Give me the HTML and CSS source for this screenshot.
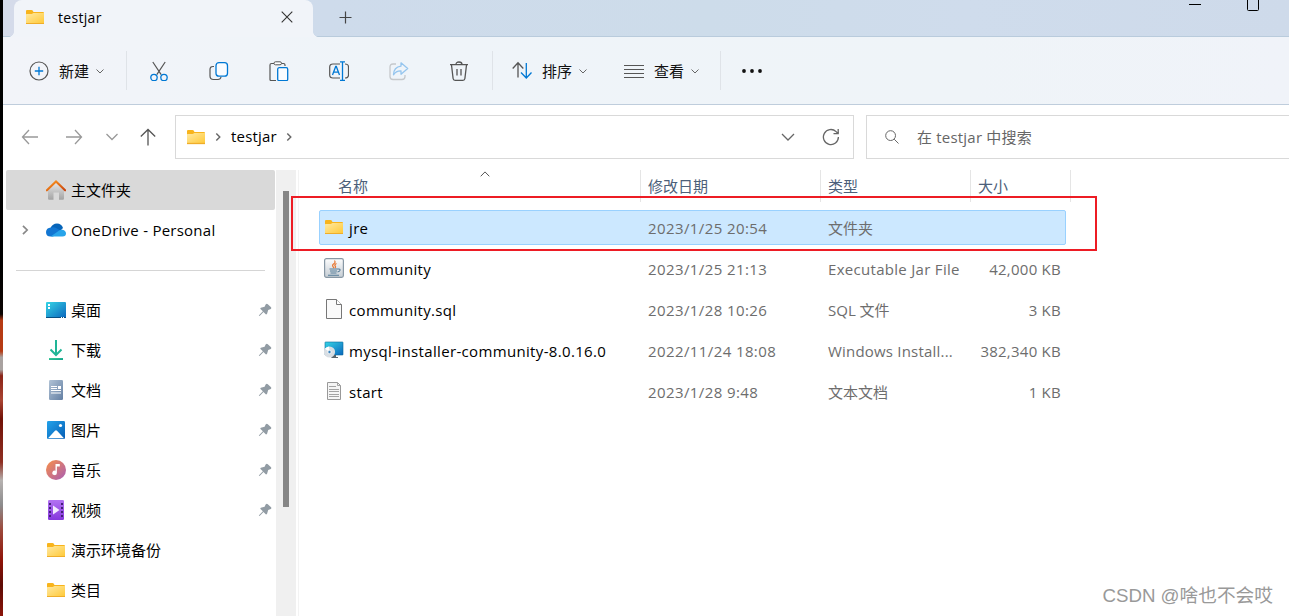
FILE: index.html
```
<!DOCTYPE html>
<html lang="zh-CN">
<head>
    <meta charset="UTF-8">
    <meta name="viewport" content="width=device-width, initial-scale=1.0">
    <title>testjar</title>
    <link rel="stylesheet" href="styles.css">
</head>
<body>
    <!-- Shared icons -->
    <svg class="defs" width="0" height="0">
        <defs>
            <linearGradient id="gFolder" x1="0" y1="0" x2="1" y2="1"><stop offset="0" stop-color="#ffe9a2"/><stop offset="1" stop-color="#ffc937"/></linearGradient>
            <linearGradient id="gRoof" x1="0" y1="0" x2="1" y2="1"><stop offset="0" stop-color="#ff9a1f"/><stop offset="1" stop-color="#c8420c"/></linearGradient>
            <linearGradient id="gHouse" x1="0" y1="0" x2="0" y2="1"><stop offset="0" stop-color="#e9e9e9"/><stop offset="1" stop-color="#a3a3a3"/></linearGradient>
            <linearGradient id="gDesk" x1="0" y1="0" x2="1" y2="1"><stop offset="0" stop-color="#35d5e6"/><stop offset="1" stop-color="#0b66bd"/></linearGradient>
            <linearGradient id="gDown" x1="0" y1="0" x2="1" y2="1"><stop offset="0" stop-color="#3bcf97"/><stop offset="1" stop-color="#0f9d8c"/></linearGradient>
            <linearGradient id="gDoc" x1="0" y1="0" x2="1" y2="1"><stop offset="0" stop-color="#b1c3d6"/><stop offset="1" stop-color="#637fa3"/></linearGradient>
            <linearGradient id="gPic" x1="0" y1="0" x2="1" y2="1"><stop offset="0" stop-color="#22a2ea"/><stop offset="1" stop-color="#075eb5"/></linearGradient>
            <linearGradient id="gMusic" x1="0" y1="0" x2="1" y2="1"><stop offset="0.1" stop-color="#f18b52"/><stop offset="1" stop-color="#a85cb5"/></linearGradient>
            <linearGradient id="gVideo" x1="0" y1="0" x2="0" y2="1"><stop offset="0" stop-color="#b273f2"/><stop offset="1" stop-color="#8638dd"/></linearGradient>
            <linearGradient id="gJar" x1="0" y1="0" x2="0" y2="1"><stop offset="0" stop-color="#fdfdfd"/><stop offset="1" stop-color="#c5cdd4"/></linearGradient>
        </defs>
        <symbol id="folder" viewBox="0 0 20 20">
            <path d="M1 4q0-1 1-1h4.500q.7 0 1.200.5L8.500 5H18q1 0 1 1v10H1z" fill="#f8b41c"/>
            <path d="M1 7.500q0-.5.5-.5h5.200L8.500 6H19v10.500H1z" fill="url(#gFolder)"/>
            <path d="M1 16.500h18" stroke="#efad2a"/>
        </symbol>
        <symbol id="down" viewBox="0 0 10 10">
            <path d="M1.500 3.500L5 7l3.500-3.500" fill="none" stroke="currentColor"/>
        </symbol>
        <symbol id="right" viewBox="0 0 10 10">
            <path d="M3.300 1.500L6.800 5 3.300 8.500" fill="none" stroke="currentColor" stroke-width="1.400"/>
        </symbol>
        <symbol id="pin" viewBox="0 0 14 14">
            <path d="M7.800 1.200q1-1 2 0l3 2.800q1.200 1 0 1.900L10.200 7l-1.200 4-1 .5-2.500-2.600L1.600 13l-.8-.6L4.900 8.200 2.200 5.800l.6-1.100 3.800-.9z" fill="#929ca4"/>
        </symbol>
    </svg>

    <div class="desktop"></div>

    <div class="window">
        <div class="titlebar">
            <div class="tab">
                <svg class="icon"><use href="#folder"/></svg>
                <span class="tab-title">testjar</span>
                <svg class="tab-close" viewBox="0 0 12 12"><path d="M.7.7l10.600 10.600M11.300.7L.7 11.300" stroke="#333" stroke-width="1.100"/></svg>
            </div>
            <svg class="tab-new" viewBox="0 0 13 13"><path d="M6.500.5v12M.5 6.500h12" stroke="#444" stroke-width="1.200"/></svg>
            <div class="controls">
                <svg width="12" height="12"><path d="M0 4.500h12" stroke="#000"/></svg>
                <svg width="12" height="12"><rect x=".5" y="-2" width="11" height="12.500" rx="1" fill="none" stroke="#000"/></svg>
            </div>
        </div>

        <div class="toolbar">
            <button class="tool new">
                <svg class="icon" viewBox="0 0 20 20"><circle cx="10" cy="10" r="9" fill="none" stroke="#555" stroke-width="1.200"/><path d="M10 5.800v8.400M5.800 10h8.400" stroke="#0078d4" stroke-width="1.300"/></svg>
                <span>新建</span>
                <svg class="chev"><use href="#down"/></svg>
            </button>
            <div class="divider"></div>
            <div class="actions">
                <svg class="icon" viewBox="0 0 20 20"><path d="M3.800 1l8.400 12.600M16.200 1L7.800 13.600" stroke="#555" stroke-width="1.200"/><g fill="none" stroke="#0078d4" stroke-width="1.300"><circle cx="5" cy="16.500" r="3.200"/><circle cx="15" cy="16.500" r="3.200"/></g></svg>
                <svg class="icon" viewBox="0 0 20 20"><path d="M5 5.500H4Q1 5.500 1 8.500v6.500q0 3.500 3.500 3.500H9q2.500 0 3-2.500" fill="none" stroke="#555" stroke-width="1.200"/><rect x="7" y="1.700" width="11.500" height="13.500" rx="3" fill="#fafcff" stroke="#0078d4" stroke-width="1.300"/></svg>
                <svg class="icon" viewBox="0 0 20 20"><path d="M5 2.500H2.500Q1 2.500 1 4v14.500q0 1 1 1h5M12 2.500h2.500Q16 2.500 16 4v1" fill="none" stroke="#555" stroke-width="1.200"/><rect x="5" y=".8" width="7.500" height="3" rx="1.500" fill="#fff" stroke="#555"/><rect x="8.700" y="6.700" width="10" height="13" rx="1.500" fill="#fafcff" stroke="#0078d4" stroke-width="1.300"/></svg>
                <svg class="icon" viewBox="0 0 20 20"><path d="M11 3H4Q.7 3 .7 6v8q0 3 3.300 3h7M16 3q3.500 0 3.500 3v8q0 3-3.500 3" fill="none" stroke="#555" stroke-width="1.200"/><path d="M3.500 14l3.200-8.500h.6l3.200 8.500M4.700 11.200h4.700M13.500 1v18.500M11 .8h5M11 19.500h5" fill="none" stroke="#0078d4" stroke-width="1.300"/></svg>
                <svg class="icon" viewBox="0 0 20 20"><path d="M7 3H4Q1 3 1 6v9.500q0 3 3 3h9q3 0 3-3V14" fill="none" stroke="#c5c8cb" stroke-width="1.300"/><path d="M12 1.800l6.700 5.700-6.700 5.700v-3.400q-5-.2-7.500 4 .2-7.800 7.500-8.700z" fill="none" stroke="#95c5ee" stroke-width="1.300" stroke-linejoin="round"/></svg>
                <svg class="icon" viewBox="0 0 20 20"><g fill="none" stroke="#555" stroke-width="1.300"><path d="M1 3.700h18M2.500 4l1.600 13.500q.2 1.800 2 1.800h7.800q1.800 0 2-1.800L17.500 4M7 3.500Q7 1 10 1t3 2.500M8 8v6.500M12 8v6.500"/></g></svg>
            </div>
            <div class="divider"></div>
            <button class="tool sort">
                <svg class="icon" viewBox="0 0 20 20"><g fill="none" stroke-width="1.300"><path d="M.7 7.500L6 1.700l5.300 5.800M6 2v14.500" stroke="#555"/><path d="M9 11.500l5.300 5.500 5.200-5.500M14.300 2v14.500" stroke="#0078d4"/></g></svg>
                <span>排序</span>
                <svg class="chev"><use href="#down"/></svg>
            </button>
            <button class="tool view">
                <svg class="icon" viewBox="0 0 20 20"><path d="M0 4.500h20M0 8.500h20M0 12.500h20M0 16.500h20" stroke="#555" stroke-width="1.100"/></svg>
                <span>查看</span>
                <svg class="chev"><use href="#down"/></svg>
            </button>
            <div class="divider"></div>
            <svg class="more" viewBox="0 0 20 4"><circle cx="2" cy="2" r="1.900"/><circle cx="10" cy="2" r="1.900"/><circle cx="18" cy="2" r="1.900"/></svg>
        </div>

        <div class="navbar">
            <div class="arrows">
                <svg viewBox="0 0 18 16"><path d="M8 1L1.500 8 8 15M1.500 8H17"/></svg>
                <svg viewBox="0 0 18 16"><path d="M10 1l6.500 7L10 15M16.500 8H1"/></svg>
                <svg viewBox="0 0 18 16"><path d="M3.500 5L9 10.500 14.500 5"/></svg>
                <svg class="up" viewBox="0 0 18 16"><path d="M1.800 7.500L9 .5l7.200 7M9 .8V16.500"/></svg>
            </div>
            <div class="address">
                <svg class="icon"><use href="#folder"/></svg>
                <svg class="chev"><use href="#right"/></svg>
                <span>testjar</span>
                <svg class="chev"><use href="#right"/></svg>
                <svg class="history" viewBox="0 0 14 14"><path d="M1 4l6 6 6-6"/></svg>
                <svg class="refresh" viewBox="0 0 18 18"><path d="M16.400 9a7.500 7.500 0 1 1-2.300-5.400L16 5.500M16.200 1v4.700h-4.700"/></svg>
            </div>
            <div class="search">
                <svg viewBox="0 0 14 14"><circle cx="5.600" cy="5.600" r="4.900"/><path d="M9.200 9.200l4.300 4.300"/></svg>
                <span>在 testjar 中搜索</span>
            </div>
        </div>

        <div class="main">
            <div class="sidebar">
                <div class="side-item active">
                    <svg class="icon" viewBox="0 0 20 20"><path d="M2 9.500L10 2l8 7.500v9q0 1.200-1.200 1.200H13V12.500H7.500v7.200H3.200Q2 19.700 2 18.500z" fill="url(#gHouse)"/><path d="M.9 10.300L10 1.500l9.100 8.800" fill="none" stroke="url(#gRoof)" stroke-width="2.100" stroke-linecap="round"/></svg>
                    <span>主文件夹</span>
                </div>
                <div class="side-item drive">
                    <svg class="expand"><use href="#right"/></svg>
                    <svg class="icon" viewBox="0 0 20 20"><path d="M4.500 8Q6.500 3.500 11 3.500q4.500 0 6 4.500L12 13 3 11z" fill="#0664b9"/><path d="M5 7.500q3-1 6 1l5 3-9 5H4.500Q0 16.500 0 12q.2-4.200 5-4.500z" fill="#1276d2"/><path d="M5 16.300l7.500-5.300q2-1.800 4-1.200 3.500 1 3.500 3.700 0 3-3.500 3H6.500q-1 0-1.500-.2z" fill="#28a4ea"/></svg>
                    <span>OneDrive - Personal</span>
                </div>
                <div class="side-line"></div>
                <div class="side-item">
                    <svg class="icon" viewBox="0 0 20 20"><rect y="2" width="20" height="16" rx="1" fill="url(#gDesk)"/><path d="M0 17h20v.5q0 .5-.5.5H.5Q0 18 0 17.500z" fill="#074f83"/><path d="M2 4h2v2H2zM2 7h2v2H2zM15 17h1v1h-1zM17 17h1v1h-1z" fill="#fff"/></svg>
                    <span>桌面</span>
                    <svg class="pin"><use href="#pin"/></svg>
                </div>
                <div class="side-item">
                    <svg class="icon" viewBox="0 0 20 20"><path d="M10 0v15M4.500 9.500L10 15l5.500-5.500" fill="none" stroke="#20b596" stroke-width="2"/><path d="M3 18h14v2H3z" fill="url(#gDown)"/></svg>
                    <span>下载</span>
                    <svg class="pin"><use href="#pin"/></svg>
                </div>
                <div class="side-item">
                    <svg class="icon" viewBox="0 0 20 20"><rect x="3" width="14" height="20" rx="1.200" fill="url(#gDoc)"/><path d="M5 6h6v1H5zM5 8h6v1H5zM12 6h3v3h-3zM5 10h10v1H5zM5 12.500h10v1H5z" fill="#fff"/></svg>
                    <span>文档</span>
                    <svg class="pin"><use href="#pin"/></svg>
                </div>
                <div class="side-item">
                    <svg class="icon" viewBox="0 0 20 20"><rect x="1" y="1" width="18" height="18" rx="1.200" fill="url(#gPic)"/><path d="M2 18.300l7-7.500q1-1 2 0l7 7.500z" fill="#fff"/><circle cx="14.500" cy="5.500" r="1.600" fill="#fff"/></svg>
                    <span>图片</span>
                    <svg class="pin"><use href="#pin"/></svg>
                </div>
                <div class="side-item">
                    <svg class="icon" viewBox="0 0 20 20"><circle cx="10" cy="10" r="10" fill="url(#gMusic)"/><path d="M9.500 4h4.300v2.600h-2.900v6.100a2.300 2.300 0 1 1-1.400-2z" fill="#fff"/></svg>
                    <span>音乐</span>
                    <svg class="pin"><use href="#pin"/></svg>
                </div>
                <div class="side-item">
                    <svg class="icon" viewBox="0 0 20 20"><rect x="2" width="16" height="20" rx="1.200" fill="url(#gVideo)"/><path d="M4 3v16M16 3v16" stroke="#442078" stroke-width="2" stroke-dasharray="2 2"/><path d="M7 5.500l6.500 4.500L7 14.500z" fill="#f3eaff"/></svg>
                    <span>视频</span>
                    <svg class="pin"><use href="#pin"/></svg>
                </div>
                <div class="side-item">
                    <svg class="icon"><use href="#folder"/></svg>
                    <span>演示环境备份</span>
                </div>
                <div class="side-item">
                    <svg class="icon"><use href="#folder"/></svg>
                    <span>类目</span>
                </div>
            </div>
            <div class="scrollbar"><div class="thumb"></div></div>

            <div class="files">
                <div class="file-head">
                    <div class="col name">名称<svg class="asc" viewBox="0 0 10 6"><path d="M.7 5.300L5 .9l4.300 4.400" fill="none" stroke="#555"/></svg></div>
                    <div class="col">修改日期</div>
                    <div class="col">类型</div>
                    <div class="col">大小</div>
                </div>
                <div class="row selected">
                    <div class="name"><svg class="icon"><use href="#folder"/></svg><span>jre</span></div>
                    <div class="date">2023/1/25 20:54</div>
                    <div>文件夹</div>
                    <div class="size"></div>
                </div>
                <div class="row">
                    <div class="name">
                        <svg class="icon" viewBox="0 0 20 20"><rect x=".6" y=".6" width="18.800" height="18.800" rx="1.800" fill="url(#gJar)" stroke="#8898a5" stroke-width="1.200"/><path d="M10.500 2.500q1.500 2-1 3.500-2 1.500.5 4M12.500 5.500q-2.500 1.300-1.300 2.500.9 1-.2 2" fill="none" stroke="#e8732c" stroke-width="1.200"/><path d="M5.500 11h8.500M6 13h7M6.500 15h6M4 17.300h11M14 11q2.500-.3 2 1.400-.5 1.300-2.500 1.600" fill="none" stroke="#547c98" stroke-width="1.100"/></svg>
                        <span>community</span>
                    </div>
                    <div class="date">2023/1/25 21:13</div>
                    <div class="latin">Executable Jar File</div>
                    <div class="size">42,000 KB</div>
                </div>
                <div class="row">
                    <div class="name">
                        <svg class="icon" viewBox="0 0 20 20"><path d="M2.500.5h10l5 5v14h-15z" fill="#fafafa" stroke="#777"/><path d="M12.500.5v5h5" fill="#fff" stroke="#777"/></svg>
                        <span>community.sql</span>
                    </div>
                    <div class="date">2023/1/28 10:26</div>
                    <div>SQL 文件</div>
                    <div class="size">3 KB</div>
                </div>
                <div class="row">
                    <div class="name">
                        <svg class="icon" viewBox="0 0 20 20"><rect x="1" y="2" width="18" height="13" rx=".5" fill="url(#gDesk)" stroke="#08699b" stroke-width=".6"/><path d="M9 15h3v2h2v1H7z" fill="#59656d"/><circle cx="5.500" cy="12" r="5.600" fill="#d9dee3"/><path d="M5.500 12L1 8.700A5.600 5.600 0 0 1 5 6.400z" fill="#fff"/><circle cx="5.500" cy="12" r="1.700" fill="#3a83bd" stroke="#fff" stroke-width=".8"/></svg>
                        <span>mysql-installer-community-8.0.16.0</span>
                    </div>
                    <div class="date">2022/11/24 18:08</div>
                    <div class="latin clipped">Windows Install...</div>
                    <div class="size">382,340 KB</div>
                </div>
                <div class="row">
                    <div class="name">
                        <svg class="icon" viewBox="0 0 20 20"><path d="M3.500 1.500h10l3 3v14h-13z" fill="#f5f5f5" stroke="#999"/><path d="M13.500 1.500v3h3M5 5.500h7M5 8.500h10M5 10.500h10M5 13.500h10M5 15.500h10" fill="none" stroke="#a3a3a3"/></svg>
                        <span>start</span>
                    </div>
                    <div class="date">2023/1/28 9:48</div>
                    <div>文本文档</div>
                    <div class="size">1 KB</div>
                </div>
            </div>
        </div>
    </div>

    <div class="highlight"></div>
    <div class="watermark">CSDN @啥也不会哎</div>
</body>
</html>
```
FILE: styles.css
```
* {
    margin: 0;
    padding: 0;
    box-sizing: border-box;
}

body {
    position: relative;
    display: flex;
    height: 100vh;
    overflow: hidden;
    background: #fff;
    color: #000;
    font-family: "Open Sans", "Noto Sans CJK SC", sans-serif;
    font-size: 15px;
    line-height: 20px;
}

svg {
    display: block;
    flex: none;
}

.defs {
    position: absolute;
}

.icon {
    width: 20px;
    height: 20px;
}

.chev {
    width: 10px;
    height: 10px;
    color: #666;
}

.desktop {
    width: 3px;
    flex: none;
    background: linear-gradient(#000 0 43%, #0b0503 51%, #b63b14 52% 57%, #a9a2a0 58% 60%, #8b2418 61%, #a94432 65%, #711107 68%, #8f2f22 75%, #b6b2b0 78%, #8c8b8c 82%, #9c493b 86%, #8f1308 91%, #5d0b05 95%, #8b1409);
}

.window {
    flex: 1;
    min-width: 0;
    display: flex;
    flex-direction: column;
}

/* Title bar */
.titlebar {
    height: 37px;
    flex: none;
    display: flex;
    background: linear-gradient(to right, #d5dbea, #cedbeb 25%, #cddcea 55%, #cfdcec 75%, #cedaea);
    border-bottom: 1px solid #b9cbdc;
}

.tab {
    position: relative;
    width: 299px;
    height: 37px;
    margin-left: 11px;
    padding: 0 20px 3px 11px;
    display: flex;
    align-items: center;
    background: #f1f4f9;
    border-radius: 8px 8px 0 0;
}

/* curved feet on both sides of the tab */
.tab::before,
.tab::after {
    content: "";
    position: absolute;
    bottom: 0;
    width: 5px;
    height: 5px;
}

.tab::before {
    left: -5px;
    background: radial-gradient(circle at 0 0, transparent 4.500px, #f1f4f9 5px);
}

.tab::after {
    right: -5px;
    background: radial-gradient(circle at 100% 0, transparent 4.500px, #f1f4f9 5px);
}

.tab-title {
    flex: 1;
    margin-left: 13px;
    padding-top: 2px;
    font-size: 14px;
    font-weight: 500;
    letter-spacing: .3px;
}

.tab-close {
    width: 12px;
    height: 12px;
}

.tab-new {
    width: 13px;
    height: 13px;
    margin: 11px 0 0 26px;
}

.controls {
    display: flex;
    gap: 46px;
    margin: 0 30px 0 auto;
}

/* Toolbar */
.toolbar {
    height: 68px;
    flex: none;
    display: flex;
    align-items: center;
    background: linear-gradient(to right, #f2f4f9, #eff4f9 30%, #eff4f8 75%, #f0f3f9);
    border-bottom: 1px solid #bfcddc;
    font-size: 15px;
}

.tool {
    display: flex;
    align-items: center;
    border: none;
    background: none;
    color: #111;
    font: inherit;
}

.tool span {
    margin: 1px 6px 0 10px;
}

.new {
    margin: 0 21px 0 26px;
}

.actions {
    display: flex;
    gap: 40px;
    margin: 0 23px 0 22px;
}

.sort {
    margin: 0 36px 0 19px;
}

.view {
    margin-right: 20px;
}

.divider {
    width: 1px;
    height: 39px;
    background: #dfe3e8;
}

.more {
    width: 20px;
    height: 4px;
    margin: 1px 0 0 21px;
    fill: #111;
}

/* Navigation bar */
.navbar {
    height: 65px;
    flex: none;
    display: flex;
    padding-top: 10px;
}

.navbar svg {
    fill: none;
    stroke: #666;
    stroke-width: 1.300;
}

.navbar use {
    stroke: none;
}

.arrows {
    width: 172px;
    height: 44px;
    display: flex;
    align-items: center;
    padding-left: 18px;
}

.arrows svg {
    width: 18px;
    height: 16px;
    margin-right: 26px;
    stroke: #999;
}

.arrows svg:nth-child(2) {
    margin-right: 20px;
}

.arrows svg:nth-child(3) {
    margin-right: 18px;
}

.arrows .up {
    margin: 0;
    stroke: #555;
    overflow: visible;
}

.address {
    width: 679px;
    height: 44px;
    display: flex;
    align-items: center;
    padding: 0 13px 1px 10px;
    border: 1px solid #d9d9d9;
}

.address span {
    padding-bottom: 2px;
    letter-spacing: .2px;
}

.address .chev {
    margin: 0 8px 0 7px;
}

.history {
    width: 14px;
    height: 14px;
    margin: 0 27px 0 auto;
}

.refresh {
    width: 18px;
    height: 18px;
}

.search {
    flex: 1;
    height: 44px;
    margin-left: 12px;
    padding: 0 0 1px 18px;
    display: flex;
    align-items: center;
    border: 1px solid #d9d9d9;
    border-right: none;
    color: #666;
    letter-spacing: .2px;
}

.search svg {
    width: 14px;
    height: 14px;
    margin-right: 18px;
    stroke-width: 1;
}

/* Side navigation */
.main {
    flex: 1;
    min-height: 0;
    display: flex;
}

.sidebar {
    width: 269px;
    margin-left: 3px;
}

.side-item {
    height: 40px;
    display: flex;
    align-items: center;
    padding: 0 3px 0 40px;
    border-radius: 2px;
}

.side-item span {
    margin-left: 5px;
}

.side-item.active {
    background: #d9d9d9;
}

.side-item.drive {
    padding-left: 13px;
    letter-spacing: .25px;
}

.expand {
    width: 12px;
    height: 12px;
    margin-right: 15px;
    color: #888;
}

.side-line {
    height: 1px;
    margin: 20px 10px 19px;
    background: #d5d5d5;
}

.pin {
    width: 14px;
    height: 14px;
    margin-left: auto;
}

.scrollbar {
    width: 20px;
    margin-left: 1px;
    padding: 21px 7px 0;
    background: #f0f0f0;
}

.thumb {
    width: 6px;
    height: 316px;
    background: #868686;
}

/* File list */
.files {
    flex: 1;
    margin-left: 2px;
    border-left: 1px solid #f3f3f3;
}

.file-head {
    height: 32px;
    margin: 0 0 8px 31px;
    display: grid;
    grid-template-columns: 311px 180px 150px 100px;
    color: #4c607a;
}

.col {
    position: relative;
    padding: 6px 0 0 7px;
    border-right: 1px solid #e5e5e5;
}

.col.name {
    padding-left: 8px;
}

.asc {
    position: absolute;
    left: 150px;
    top: 1px;
    width: 10px;
    height: 6px;
}

.row {
    width: 747px;
    height: 35px;
    margin: 0 0 6px 20px;
    padding: 1px 4px;
    display: grid;
    grid-template-columns: 324px 180px 132px 1fr;
    align-items: center;
    border: 1px solid transparent;
    border-radius: 2px;
    color: #6d6d6d;
    white-space: nowrap;
}

.row.selected {
    background: #cce8ff;
    border-color: #99d1ff;
}

.row .name {
    display: flex;
    align-items: center;
    color: #000;
    letter-spacing: .34px;
}

.row .name .icon {
    margin-top: -2px;
}

.row .name span {
    margin-left: 5px;
}

.date {
    letter-spacing: .4px;
}

.latin {
    letter-spacing: .3px;
}

.clipped {
    letter-spacing: .2px;
}

.size {
    text-align: right;
    letter-spacing: .25px;
}

/* Annotation frame over the first row */
.highlight {
    position: absolute;
    left: 291px;
    top: 196px;
    width: 806px;
    height: 55px;
    border: 2px solid #ed1c24;
}

.watermark {
    position: absolute;
    right: 16px;
    bottom: 9px;
    color: #999;
    font-family: "Liberation Sans", "Noto Sans CJK SC", sans-serif;
    font-size: 18.700px;
    line-height: 22px;
}
```
